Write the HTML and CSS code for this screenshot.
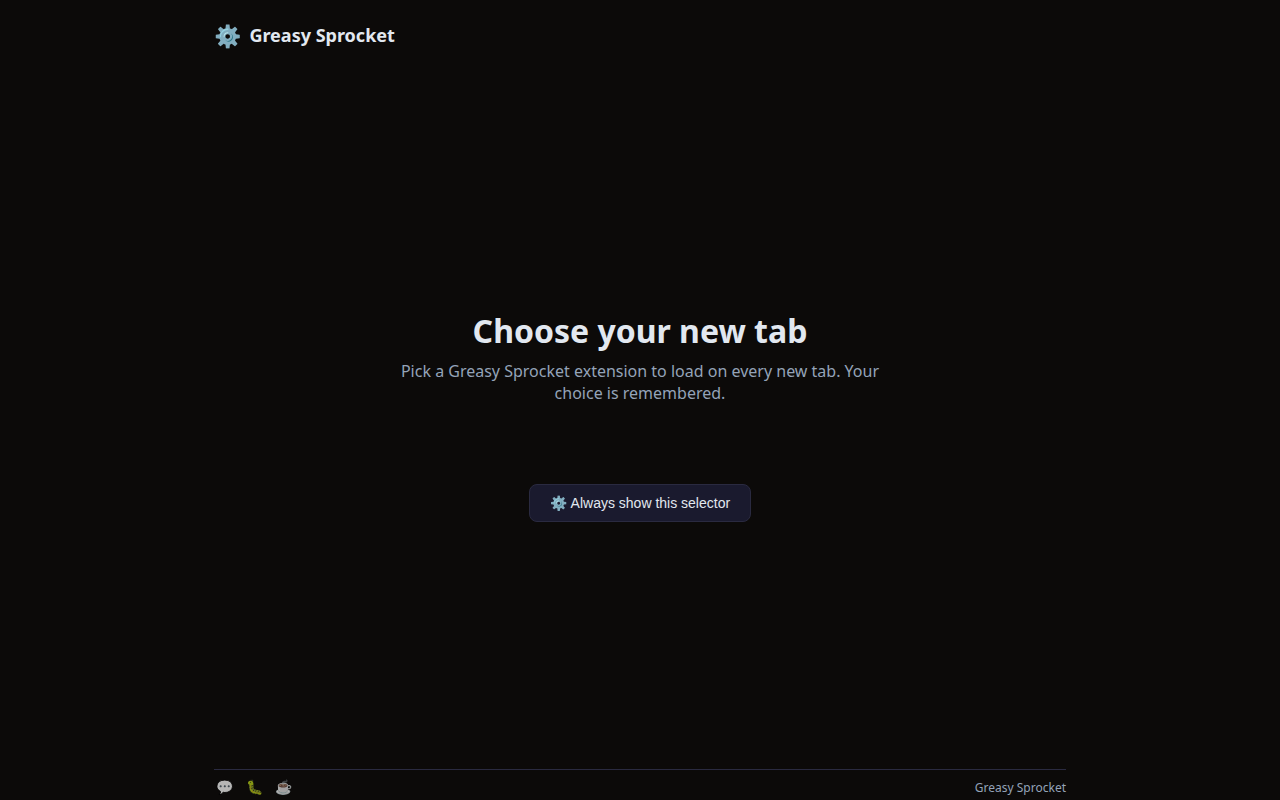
FILE: index.html
```html
<!DOCTYPE html>
<html lang="en">
<head>
<meta charset="utf-8">
<title>Greasy Sprocket</title>
<link rel="stylesheet" href="styles.css">
</head>
<body>
<div class="app">
  <header class="header"><span class="logo">⚙️</span><span class="brand">Greasy Sprocket</span></header>
  <main class="main">
    <h1 class="title">Choose your new tab</h1>
    <p class="subtitle">Pick a Greasy Sprocket extension to load on every new tab. Your choice is remembered.</p>
    <button class="button" type="button">⚙️ Always show this selector</button>
  </main>
  <footer class="footer">
    <nav class="links"><a class="link">💬</a><a class="link">🐛</a><a class="link">☕</a></nav>
    <span>Greasy Sprocket</span>
  </footer>
</div>
</body>
</html>
```
FILE: styles.css
```css
* { box-sizing: border-box; margin: 0; padding: 0; }
body {
  height: 100vh;
  overflow: hidden;
  background: #0c0a09;
  color: #e2e8f0;
  font-family: "Noto Sans", sans-serif;
}
.app {
  width: 852px;
  height: 100vh;
  margin: 0 auto;
  display: flex;
  flex-direction: column;
}
.header {
  height: 72px;
  display: flex;
  align-items: center;
  gap: 8.4px;
}
.logo { font-size: 22px; line-height: 30px; padding-bottom: 2px; }
.brand { font-size: 18px; font-weight: 700; line-height: 24px; padding-bottom: 2px; }
.main {
  flex: 1;
  display: flex;
  flex-direction: column;
  align-items: center;
  padding-top: 237px;
}
.title { font-size: 32px; font-weight: 700; line-height: 44px; }
.subtitle {
  width: 480px;
  margin-top: 7px;
  color: #94a3b8;
  font-size: 16px;
  line-height: 22px;
  text-align: center;
}
.button {
  width: 222px;
  height: 38px;
  margin-top: 80px;
  padding-left: 0.6px;
  border: 1px solid #2a2a40;
  border-radius: 8px;
  background: #1a1a2e;
  color: #e2e8f0;
  font-family: "Liberation Sans", sans-serif;
  font-size: 14px;
}
.footer {
  height: 31px;
  border-top: 1px solid #2a2a40;
  padding-top: 4px;
  display: flex;
  align-items: center;
  justify-content: space-between;
  color: #94a3b8;
  font-size: 12px;
}
.links { display: flex; gap: 12.3px; padding: 0 0 2px 2.3px; }
.link { font-size: 14px; opacity: 0.7; }
```
